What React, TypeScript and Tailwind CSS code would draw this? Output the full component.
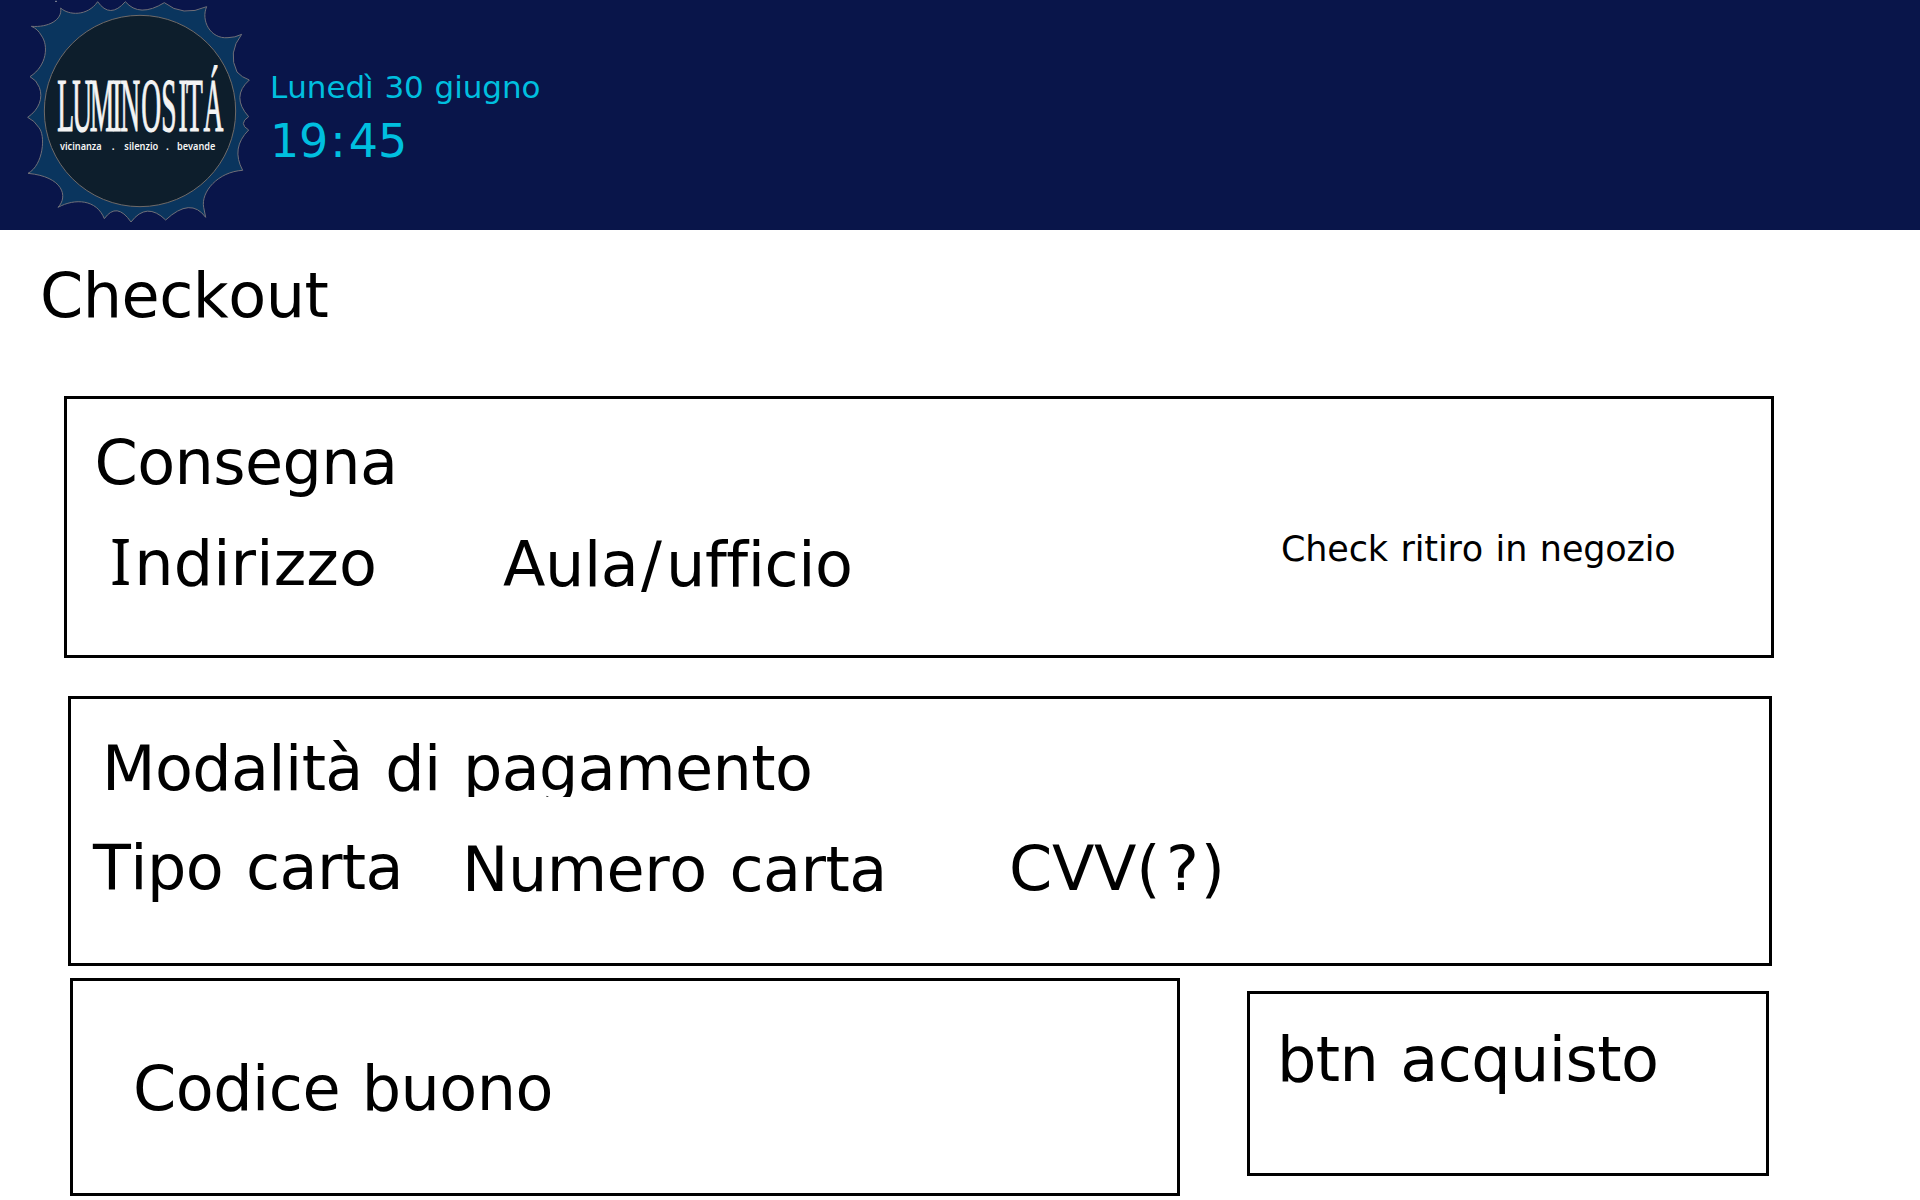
import React from "react";

const STAR =
  "M182 24 C205 46 262 50 293 5 Q330 58 376 5 Q418 54 493 8 Q548 52 620 20 C602 60 630 118 684 113 Q705 113 725 103 Q682 158 711 216 Q725 232 748 240 Q692 290 746 350 Q714 371 746 390 Q692 444 728 511 C655 515 602 575 611 622 L617 652 Q572 590 497 660 Q440 604 393 666 Q350 604 313 656 C290 598 225 594 174 622 C205 590 190 530 84 520 C130 496 138 405 116 382 Q104 362 83 352 C118 328 130 293 118 262 Q110 240 90 230 C142 196 145 136 125 108 Q113 86 94 79 C145 83 188 60 182 24 Z";

function Logo() {
  return (
    <svg viewBox="0 0 840 690" className="h-[230px] w-[270px] shrink-0" preserveAspectRatio="xMinYMin slice">
      <path d="M165 4h6" stroke="#8a8f9c" strokeWidth="3" />
      <path d={STAR} fill="#0a355e" stroke="#6f6f78" strokeWidth="3" strokeLinejoin="miter" />
      <circle cx="420" cy="333" r="287" fill="#0d1e2c" stroke="#6f6a68" strokeWidth="3" />
      <text
        transform="translate(0 392) scale(0.36 1)"
        x="478 603 747 936 1003 1178 1344 1488 1550 1696"
        fontSize="229"
        fontFamily='"Liberation Serif", serif'
        fill="#f4f4f4"
        stroke="#f4f4f4"
        strokeWidth="0.9"
        vectorEffect="non-scaling-stroke"
      >
        LUMINOSITÁ
      </text>
      <g fontSize="31" fontWeight="600" fontFamily='"Noto Sans", sans-serif' fill="#f4f4f4">
        <text x="180" y="451" textLength="125" lengthAdjust="spacingAndGlyphs">vicinanza</text>
        <text x="335" y="451">.</text>
        <text x="373" y="451" textLength="102" lengthAdjust="spacingAndGlyphs">silenzio</text>
        <text x="498" y="451">.</text>
        <text x="531" y="451" textLength="115" lengthAdjust="spacingAndGlyphs">bevande</text>
      </g>
    </svg>
  );
}

export default function App() {
  return (
    <div className="h-[1200px] w-[1920px] overflow-hidden bg-white font-['DejaVu_Sans',Verdana,sans-serif] text-[62px] leading-[73px] whitespace-nowrap text-black [font-kerning:none] [font-variant-ligatures:none]">
      <header className="flex h-[230px] bg-[#09154a] text-[#00bfdf]">
        <Logo />
        <div className="pt-[69px]">
          <p className="text-[31px] leading-[36px] tracking-[-0.05px] [word-spacing:1px]">Lunedì 30 giugno</p>
          <p className="mt-[9px] text-[46px] leading-[54px] tracking-[-0.2px]">
            19<span className="mr-[3.4px] ml-[2px]">:</span>45
          </p>
        </div>
      </header>

      <main>
        <h1 className="mt-[29px] ml-[40px] tracking-[-0.5px]">Checkout</h1>

        <section className="mt-[64px] ml-[64px] h-[262px] w-[1710px] border-[3px] border-black pt-[27px]">
          <h2 className="ml-[27.5px] tracking-[-0.6px]">Consegna</h2>
          <div className="mt-[28px] ml-[43px] flex">
            <div className="w-[393px] tracking-[0.16px]">
              <span className="font-['Noto_Sans',sans-serif] text-[63px] leading-[0] tracking-[2.9px]">I</span>ndirizzo
            </div>
            <div className="mt-px w-[778px] tracking-[-0.4px]">
              Aula<span className="mr-[4.6px] ml-[2.6px]">/</span>ufficio
            </div>
            <div className="mt-[2px] text-[35px] leading-[41px] tracking-[-0.16px] [word-spacing:1.7px]">
              Check ritiro in negozio
            </div>
          </div>
        </section>

        <section className="mt-[38px] ml-[68px] h-[270px] w-[1704px] border-[3px] border-black pt-[33px]">
          <h2 className="ml-[31px] h-[65px] overflow-hidden tracking-[-0.6px] [word-spacing:3.3px]">
            Modalità di pagamento
          </h2>
          <div className="mt-[34px] ml-[22px] flex">
            <div className="w-[369px] tracking-[-0.6px] [word-spacing:4px]">Tipo carta</div>
            <div className="mt-[2px] w-[547px] tracking-[-0.5px] [word-spacing:3.6px]">Numero carta</div>
            <div className="mt-px tracking-[-0.3px]">
              CVV<span className="mr-[6px]">(</span>
              <span className="mr-[2px]">?</span>)
            </div>
          </div>
        </section>

        <div className="mt-[12px] ml-[70px] flex">
          <section className="h-[218px] w-[1110px] border-[3px] border-black pt-[71px] pl-[60px]">
            <p className="tracking-[-0.5px] [word-spacing:2.4px]">Codice buono</p>
          </section>
          <button className="mt-[13px] ml-[67px] flex h-[185px] w-[522px] items-start border-[3px] border-black pt-[29px] pl-[27px] tracking-[-0.55px] [word-spacing:2.8px]">
            btn acquisto
          </button>
        </div>
      </main>
    </div>
  );
}
